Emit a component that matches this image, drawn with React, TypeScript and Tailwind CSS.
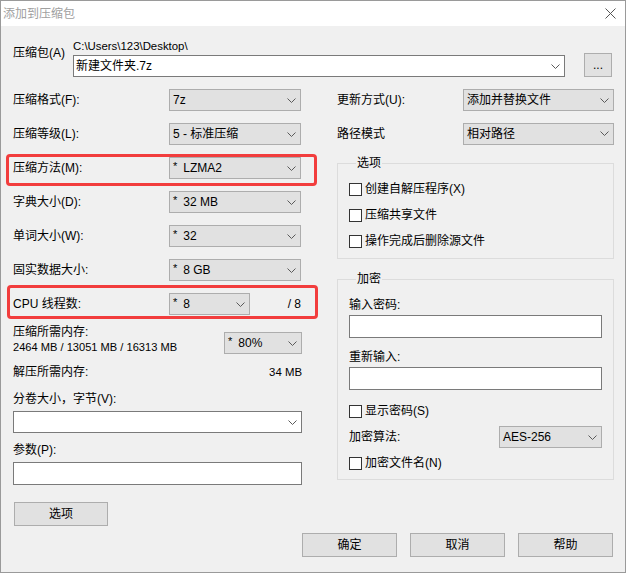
import React from "react";

const FONT = '"Liberation Sans", "Noto Sans CJK SC", sans-serif';

function Chevron() {
  return (
    <svg width="9" height="5" viewBox="0 0 9 5" className="shrink-0">
      <polyline points="0.5,0.5 4.5,4.5 8.5,0.5" fill="none" stroke="#5a5a5a" strokeWidth="1" />
    </svg>
  );
}

function Select({ text, w, star = false }: { text: string; w: string; star?: boolean }) {
  return (
    <div className={`${w} h-[22px] border border-[#adadad] bg-[#e1e1e1] flex items-center pl-[3px] pr-[4px] text-black`}>
      <span className="flex-1 whitespace-nowrap flex items-center">
        {star && <span className="mr-[6px] text-[11px] relative top-[-2px]">*</span>}
        <span>{text}</span>
      </span>
      <Chevron />
    </div>
  );
}

function Checkbox({ label }: { label: string }) {
  return (
    <div className="flex items-center gap-[3px]">
      <div className="w-[13px] h-[13px] border border-[#333333] bg-white shrink-0" />
      <span>{label}</span>
    </div>
  );
}

function Label({ children }: { children: React.ReactNode }) {
  return <span className="whitespace-nowrap">{children}</span>;
}

function Row({ label, children }: { label: string; children: React.ReactNode }) {
  return (
    <div className="h-[34px] flex items-center">
      <div className="w-[156px]">
        <Label>{label}</Label>
      </div>
      {children}
    </div>
  );
}

function Btn({ text, w }: { text: string; w: string }) {
  return (
    <div className={`${w} h-[24px] border border-[#adadad] bg-[#e1e1e1] flex items-center justify-center`}>
      {text}
    </div>
  );
}

export default function App() {
  return (
    <div
      className="relative w-[626px] h-[573px] border border-[#9a9a9a] bg-[#f0f0f0] text-black flex flex-col overflow-hidden text-[12px] leading-[14px]"
      style={{ fontFamily: FONT }}
    >
      {/* title bar */}
      <div className="h-[25px] bg-white flex items-center justify-between shrink-0">
        <span className="pl-[2px] text-[#a0a0a0]">添加到压缩包</span>
        <svg width="11" height="11" viewBox="0 0 11 11" className="mr-[9px]">
          <line x1="0.5" y1="0.5" x2="10.5" y2="10.5" stroke="#555" strokeWidth="1" />
          <line x1="10.5" y1="0.5" x2="0.5" y2="10.5" stroke="#555" strokeWidth="1" />
        </svg>
      </div>

      {/* archive row */}
      <div className="flex items-start pl-[12px] pr-[12px] pt-[13px]">
        <div className="w-[60px] mt-[7px]">
          <Label>压缩包(A)</Label>
        </div>
        <div className="w-[492px] flex flex-col">
          <span className="h-[14px] text-[11.4px]">C:\Users\123\Desktop\</span>
          <div className="mt-[2px] h-[22px] border border-[#7a7a7a] bg-white flex items-center pl-[2px] pr-[4px]">
            <span className="flex-1">新建文件夹.7z</span>
            <Chevron />
          </div>
        </div>
        <div className="ml-[19px] mt-[14px] w-[28px] h-[24px] border border-[#adadad] bg-[#e1e1e1] flex items-center justify-center leading-[10px]">
          ...
        </div>
      </div>

      {/* main two columns */}
      <div className="flex items-start pl-[12px] mt-[6px]">
        {/* left column */}
        <div className="w-[289px] flex flex-col">
          <Row label="压缩格式(F):"><Select text="7z" w="w-[132px]" /></Row>
          <Row label="压缩等级(L):"><Select text="5 - 标准压缩" w="w-[132px]" /></Row>
          <Row label="压缩方法(M):"><Select text="LZMA2" star w="w-[132px]" /></Row>
          <Row label="字典大小(D):"><Select text="32 MB" star w="w-[132px]" /></Row>
          <Row label="单词大小(W):"><Select text="32" star w="w-[132px]" /></Row>
          <Row label="固实数据大小:"><Select text="8 GB" star w="w-[132px]" /></Row>
          <Row label="CPU 线程数:">
            <Select text="8" star w="w-[81px]" />
            <span className="ml-auto pr-[1px]">/ 8</span>
          </Row>

          {/* memory */}
          <div className="flex items-start mt-[4px]">
            <div className="flex flex-col flex-1">
              <Label>压缩所需内存:</Label>
              <span className="mt-[1px] text-[11.1px]">2464 MB / 13051 MB / 16313 MB</span>
            </div>
            <div className="mt-[7px]">
              <Select text="80%" star w="w-[78px]" />
            </div>
          </div>
          <div className="flex justify-between mt-[11px]">
            <Label>解压所需内存:</Label>
            <span className="text-[11.4px]">34 MB</span>
          </div>
          <div className="mt-[13px]">
            <Label>分卷大小，字节(V):</Label>
          </div>
          <div className="mt-[5px] h-[22px] border border-[#7a7a7a] bg-white flex items-center justify-end pr-[4px]">
            <Chevron />
          </div>
          <div className="mt-[10px]">
            <Label>参数(P):</Label>
          </div>
          <div className="mt-[5px] h-[23px] border border-[#7a7a7a] bg-white" />
          <div className="mt-[17px] ml-[1px]">
            <Btn text="选项" w="w-[94px]" />
          </div>
        </div>

        {/* right column */}
        <div className="ml-[35px] w-[277px] flex flex-col">
          <div className="h-[34px] flex items-center">
            <div className="w-[126px]"><Label>更新方式(U):</Label></div>
            <Select text="添加并替换文件" w="w-[151px]" />
          </div>
          <div className="h-[33px] flex items-center">
            <div className="w-[126px]"><Label>路径模式</Label></div>
            <Select text="相对路径" w="w-[151px]" />
          </div>

          <fieldset className="mt-[6px] h-[103px] border border-[#dcdcdc] pl-[11px] pr-[11px]">
            <legend className="ml-[7px] px-[1px]">选项</legend>
            <div className="pt-[6px] flex flex-col">
              <div className="h-[26px] flex items-center"><Checkbox label="创建自解压程序(X)" /></div>
              <div className="h-[26px] flex items-center"><Checkbox label="压缩共享文件" /></div>
              <div className="h-[26px] flex items-center"><Checkbox label="操作完成后删除源文件" /></div>
            </div>
          </fieldset>

          <fieldset className="mt-[13px] h-[208px] border border-[#dcdcdc] pl-[11px] pr-[11px]">
            <legend className="ml-[7px] px-[1px]">加密</legend>
            <div className="flex flex-col">
              <div className="mt-[12px]"><Label>输入密码:</Label></div>
              <div className="mt-[3px] h-[23px] border border-[#7a7a7a] bg-white" />
              <div className="mt-[12px]"><Label>重新输入:</Label></div>
              <div className="mt-[3px] h-[23px] border border-[#7a7a7a] bg-white" />
              <div className="mt-[10px] h-[22px] flex items-center"><Checkbox label="显示密码(S)" /></div>
              <div className="mt-[4px] h-[22px] flex items-center justify-between">
                <Label>加密算法:</Label>
                <Select text="AES-256" w="w-[103px]" />
              </div>
              <div className="mt-[4px] h-[22px] flex items-center"><Checkbox label="加密文件名(N)" /></div>
            </div>
          </fieldset>
        </div>
      </div>

      {/* bottom buttons */}
      <div className="flex justify-end gap-[13px] pr-[12px] mt-[7px]">
        <Btn text="确定" w="w-[95px]" />
        <Btn text="取消" w="w-[95px]" />
        <Btn text="帮助" w="w-[95px]" />
      </div>

      {/* annotation highlights */}
      <div className="absolute left-[5px] top-[153px] w-[311px] h-[32px] border-[3px] border-[#f23d3d] rounded-[4px] pointer-events-none" />
      <div className="absolute left-[6px] top-[284px] w-[311px] h-[34px] border-[3px] border-[#f23d3d] rounded-[4px] pointer-events-none" />
    </div>
  );
}
